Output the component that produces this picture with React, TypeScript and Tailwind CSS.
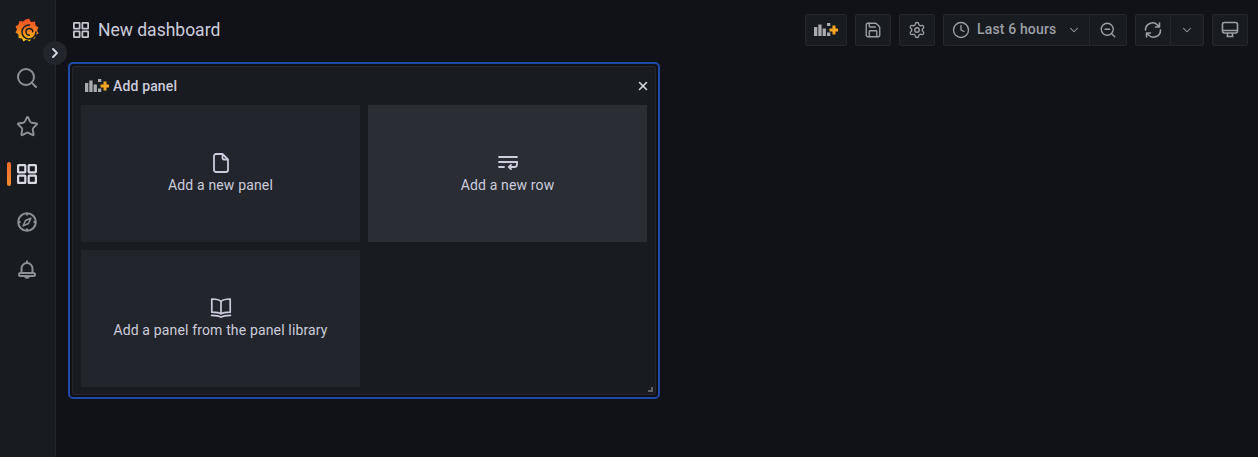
import React from 'react'
import { ChevronDown, ChevronRight, X, Search, Star, Save, Settings, Clock, ZoomOut } from 'lucide-react'

function AppsIcon({ className }: { className?: string }) {
  return (
    <svg viewBox="0 0 20 20" fill="none" stroke="currentColor" strokeWidth="2.2" className={className}>
      <rect x="1.1" y="1.1" width="7.2" height="7.2" rx="0.5" />
      <rect x="11.7" y="1.1" width="7.2" height="7.2" rx="0.5" />
      <rect x="1.1" y="11.7" width="7.2" height="7.2" rx="0.5" />
      <rect x="11.7" y="11.7" width="7.2" height="7.2" rx="0.5" />
    </svg>
  )
}

function GrafanaLogo() {
  return (
    <svg viewBox="0 0 24 24" className="w-6 h-6">
      <defs>
        <linearGradient id="gf" x1="0" y1="1" x2="0" y2="0">
          <stop offset="0" stopColor="#fbca0a" />
          <stop offset="0.5" stopColor="#f47a20" />
          <stop offset="1" stopColor="#ef4b26" />
        </linearGradient>
      </defs>
      <path
        fill="url(#gf)"
        d="M14 .5 16 4 20 3.5 20.5 7.5 23.5 9.5 22 12.5 23.5 15.5 20.5 17 20 20.5 16.5 20.5 14.5 23.5 11.5 21.5 8.5 23.5 7 20.5 3.5 20 3.5 16.5 .5 14.5 2 11.5 .5 8.5 3.5 6.5 4.5 3 8 3.5 10.5 1.5Z"
      />
      <path
        fill="none"
        stroke="#181b1f"
        strokeWidth="1.5"
        strokeLinecap="round"
        d="M14.5 7A7 7 0 1 0 21 14M17.8 13.8A3.4 3.4 0 1 0 14.4 17.2"
      />
    </svg>
  )
}

function CompassIcon() {
  return (
    <svg viewBox="0 0 20 20" fill="none" stroke="currentColor" strokeWidth="2" className="w-5 h-5">
      <circle cx="10" cy="10" r="8.8" />
      <path d="M10 1v2.5M10 16.5V19M1 10h2.5M16.5 10H19" />
      <path d="M13.8 6.2 11.5 11.5 6.2 13.8 8.5 8.5Z" strokeLinejoin="round" strokeWidth="1.6" />
    </svg>
  )
}

function BellIcon() {
  return (
    <svg viewBox="0 0 18 20" fill="none" stroke="currentColor" strokeWidth="2" strokeLinejoin="round" className="w-[18px] h-5">
      <path d="M9 .5v2M3.5 13V8.5a5.5 5.5 0 0 1 11 0V13" />
      <rect x="1" y="13" width="16" height="3" rx="1.5" />
      <path d="M6.8 16.2a2.3 2.3 0 0 0 4.4 0" />
    </svg>
  )
}

function AddPanelIcon() {
  return (
    <svg viewBox="0 0 24 14" className="w-6 h-3.5 shrink-0">
      <g fill="#a9abb1">
        <rect x="0" y="4" width="3.3" height="9" />
        <rect x="4.3" y="1.5" width="3.3" height="11.5" />
        <rect x="8.6" y="5.5" width="3.3" height="7.5" />
        <rect x="13" y="0" width="3.3" height="3" />
        <rect x="13" y="9.500" width="3.3" height="3.5" />
      </g>
      <path fill="#f6a623" d="M18.5 2.5h3V5.500H24.500v3H21.500V11.500h-3V8.500H15.500v-3h3Z" />
    </svg>
  )
}

function SyncIcon() {
  return (
    <svg viewBox="0 0 18 18" fill="none" stroke="currentColor" strokeWidth="1.6" strokeLinecap="round" strokeLinejoin="round" className="w-[18px] h-[18px]">
      <path d="M1.5 9A7 7 0 0 1 13.5 4L15.5 6M15.5 2v4h-4" />
      <path d="M16.5 9A7 7 0 0 1 4.5 14L2.5 12M2.5 16v-4h4" />
    </svg>
  )
}

function TvIcon() {
  return (
    <svg viewBox="0 0 18 18" fill="none" stroke="currentColor" strokeWidth="1.6" strokeLinejoin="round" className="w-[18px] h-[18px]">
      <rect x="1.5" y="1.5" width="15" height="10.500" rx="2" />
      <path d="M1.500 9.500h15M5.500 15.500h7M6.500 12v3.500M11.500 12v3.500" />
    </svg>
  )
}

function FileIcon() {
  return (
    <svg viewBox="0 0 16 20" fill="none" stroke="currentColor" strokeWidth="1.8" strokeLinejoin="round" className="w-4 h-5">
      <path d="M3 1h6.5L15 6.500V17a2 2 0 0 1-2 2H3a2 2 0 0 1-2-2V3a2 2 0 0 1 2-2Z" />
      <path d="M9.500 1.500V5A1.500 1.500 0 0 0 11 6.500h3.500" />
    </svg>
  )
}

function RowIcon() {
  return (
    <svg viewBox="0 0 20 14" fill="none" stroke="currentColor" strokeWidth="1.8" strokeLinecap="round" strokeLinejoin="round" className="w-5 h-3.5">
      <path d="M1 1h18M1 6h18M1 11h5" />
      <path d="M19 6v2.500A2.500 2.500 0 0 1 16.500 11H11M13 8.800 10.800 11l2.200 2.200" />
    </svg>
  )
}

function BookIcon() {
  return (
    <svg viewBox="0 0 22 20" fill="none" stroke="currentColor" strokeWidth="1.7" strokeLinejoin="round" className="w-[22px] h-5">
      <path d="M11 3.500C9.500 1.800 7 1 1.800 1v13.200c5 0 7.600.3 9.200 1.800 1.600-1.500 4.200-1.800 9.200-1.800V1C15 1 12.500 1.800 11 3.500ZM11 3.500V16" />
      <path d="M1.500 17.300c5 0 7.700.4 9.500 1.900 1.800-1.500 4.500-1.900 9.500-1.900" strokeLinecap="round" />
    </svg>
  )
}

const toolBtn = 'h-8 flex items-center justify-center bg-[#181b1f] border border-[#25272c] rounded-[2px] text-[#9d9fa6]'

function Tile({ icon, label, hover }: { icon: React.ReactNode; label: string; hover?: boolean }) {
  return (
    <div className={`flex flex-col items-center justify-center h-[137px] text-[#ccccdc] text-sm leading-[21px] tracking-[0.15px] ${hover ? 'bg-[#2a2d34]' : 'bg-[#22252b]'}`}>
      <div className="h-[21px] pt-px flex items-center justify-center">{icon}</div>
      <span className="mt-[2px]">{label}</span>
    </div>
  )
}

export default function App() {
  return (
    <div className="flex h-screen bg-[#111217] font-['Roboto',sans-serif] overflow-hidden">
      <aside className="relative w-14 shrink-0 bg-[#181b1f] border-r border-[#25272c] pt-1.5 pr-px flex flex-col text-[#8e9097]">
        <div className="h-12 flex items-center justify-center"><GrafanaLogo /></div>
        <div className="h-12 flex items-center justify-center"><Search className="w-6 h-6" strokeWidth={2} /></div>
        <div className="h-12 flex items-center justify-center"><Star className="w-[23px] h-[23px]" strokeWidth={2} /></div>
        <div className="relative h-12 flex items-center justify-center text-[#d8d9e3]">
          <span className="absolute left-[7px] top-3 w-1 h-6 rounded-sm bg-gradient-to-b from-[#f2692e] to-[#f48b2d]" />
          <AppsIcon className="w-5 h-5" />
        </div>
        <div className="h-12 flex items-center justify-center"><CompassIcon /></div>
        <div className="h-12 flex items-center justify-center"><BellIcon /></div>
        <div className="absolute left-[43px] top-[41px] w-6 h-6 rounded-full bg-[#22252b] flex items-center justify-center text-[#d8d9e3]">
          <ChevronRight className="w-4 h-4" strokeWidth={2.8} />
        </div>
      </aside>

      <main className="flex-1 min-w-0">
        <header className="h-[62px] flex items-start pt-3.5 pl-[17px] pr-2.5">
          <div className="h-8 flex items-center gap-[9px] text-[#ccccdc]">
            <AppsIcon className="w-4 h-4 text-[#c4c5cf]" />
            <h1 className="text-[17.5px] font-normal leading-none pt-px">New dashboard</h1>
          </div>
          <div className="ml-auto flex gap-2">
            <div className={`${toolBtn} w-[42px]`}><AddPanelIcon /></div>
            <div className={`${toolBtn} w-9`}><Save className="w-[18px] h-[18px]" strokeWidth={1.8} /></div>
            <div className={`${toolBtn} w-9`}><Settings className="w-[18px] h-[18px]" strokeWidth={1.8} /></div>
            <div className={`${toolBtn} w-[184px]`}>
              <div className="flex-1 flex items-center pl-2 h-full border-r border-[#25272c]">
                <Clock className="w-[18px] h-[18px] mr-[7px]" strokeWidth={1.8} />
                <span className="text-sm font-medium tracking-[0.15px] pb-0.5">Last 6 hours</span>
                <ChevronDown className="w-3.5 h-3.5 ml-auto mr-2" strokeWidth={1.8} />
              </div>
              <div className="w-9 flex items-center justify-center"><ZoomOut className="w-[18px] h-[18px]" strokeWidth={1.8} /></div>
            </div>
            <div className={`${toolBtn} w-[69px]`}>
              <div className="w-[35px] h-full flex items-center justify-center border-r border-[#25272c]">
                <SyncIcon />
              </div>
              <div className="flex-1 flex items-center justify-center"><ChevronDown className="w-3.5 h-3.5" strokeWidth={1.8} /></div>
            </div>
            <div className={`${toolBtn} w-9`}><TvIcon /></div>
          </div>
        </header>

        <section className="ml-3 w-[592px] h-[337px] border-2 border-[#1f4aa5] rounded-[5px] p-0.5">
          <div className="relative h-full bg-[#181b1f] border border-[#25272c] rounded-[2px] px-2">
            <div className="h-[38px] flex items-center pl-1 text-[#ccccdc]">
              <AddPanelIcon />
              <span className="ml-1 text-sm font-medium tracking-[0.15px]">Add panel</span>
              <X className="w-3.5 h-3.5 ml-auto -mr-[3px] text-[#d8d9e3]" strokeWidth={2.6} />
            </div>
            <div className="grid grid-cols-2 gap-2">
              <Tile icon={<FileIcon />} label="Add a new panel" />
              <Tile icon={<RowIcon />} label="Add a new row" hover />
              <Tile icon={<BookIcon />} label="Add a panel from the panel library" />
            </div>
            <span className="absolute right-0.5 bottom-0.5 w-[5px] h-[5px] border-r-2 border-b-2 border-[#5f6167]" />
          </div>
        </section>
      </main>
    </div>
  )
}
